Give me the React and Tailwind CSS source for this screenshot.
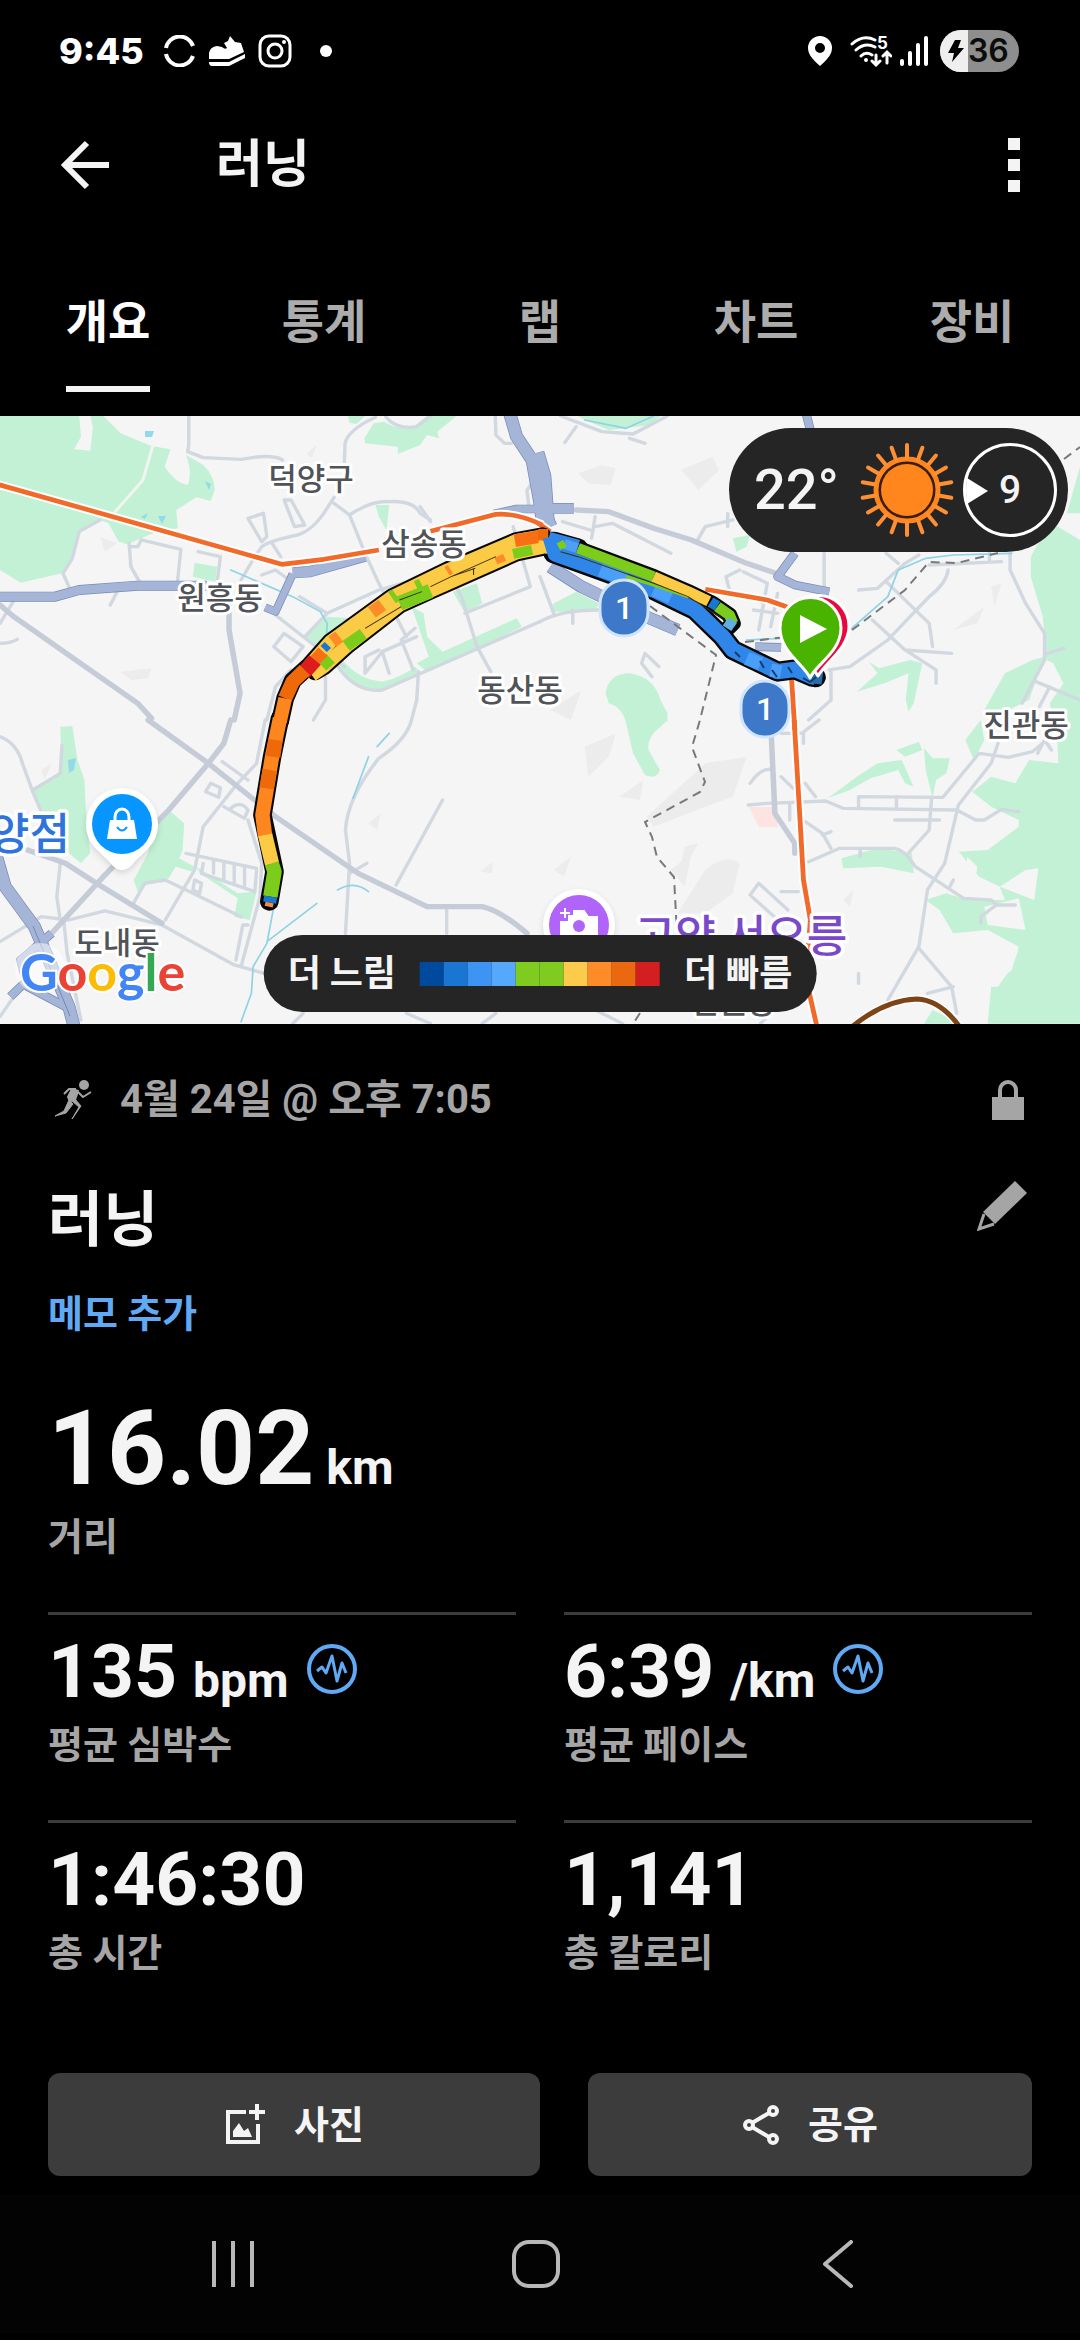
// src/pages/ActivityDetail.jsx
import { useState } from 'react';

const TABS = ['개요', '통계', '랩', '차트', '장비'];

const STATS = [
  { value: '135', unit: 'bpm', label: '평균 심박수', chart: true },
  { value: '6:39', unit: '/km', label: '평균 페이스', chart: true },
  { value: '1:46:30', label: '총 시간' },
  { value: '1,141', label: '총 칼로리' },
];

const LEGEND = [
  'bg-[#004a9e]', 'bg-[#1976d2]', 'bg-[#3d94f2]', 'bg-[#55a8fc]', 'bg-[#7fcb1f]',
  'bg-[#7fcb1f]', 'bg-[#fccb4b]', 'bg-[#fd8b27]', 'bg-[#ea6810]', 'bg-[#d41f20]',
];

// The map is drawn in four tiles, each with its own coordinates
const TILES = {
  tl: 'matrix(0.3444 0 0 0.3333 0 -6)',
  tr: 'matrix(0.3444 0 0 0.3333 540 -6)',
  bl: 'matrix(0.3444 0 0 0.3333 0 304)',
  br: 'matrix(0.3444 0 0 0.3333 540 304)',
};

const PARKS = [
  ['tl', 'M0 18H230L235 80L215 118L262 122L270 50L262 18H300L350 70L440 108L495 118L478 170Q510 220 545 225Q560 190 540 135L590 165Q625 200 623 240L612 273L570 262L512 300L516 355L455 365L410 385L370 403L345 395L315 340L290 330L225 365L210 440L180 490L60 518L0 480Z'],
  ['tl', 'M1058 85L1085 40L1115 35Q1150 60 1200 50L1240 18H1325L1270 65L1275 85L1240 75L1220 105L1155 132V110L1060 100ZM1010 18H1060L1035 42L1015 38Z'],
  ['tl', 'M565 458L630 470L625 515L560 500ZM1090 285H1130L1122 360L1100 320ZM1315 545L1385 520L1400 580L1350 610ZM1195 590L1230 610L1240 680L1285 725L1500 625L1515 650L1400 710L1240 785L1210 760L1245 740ZM885 680L950 620L1020 625L940 700L910 705Z'],
  ['tl', 'M990 745Q1040 810 1110 815Q1170 800 1205 770L1220 785Q1120 850 1070 840Q1020 820 975 765Z'],
  ['tr', 'M110 18H350L320 45L200 60L130 30ZM560 385L610 375L600 410L570 425ZM40 580L105 545L170 580L160 605L30 605Z'],
  ['tr', 'M1568 170L1530 310H1568ZM1425 440L1480 335L1568 390V960H1500L1480 880L1520 820L1490 760L1470 750L1460 620L1425 500ZM1430 750L1465 740L1420 870L1360 900L1290 900L1350 790ZM920 845L980 790L955 755L985 775L1075 750L1110 760L1085 880L1070 905L1062 870L1070 790L1000 820Z'],
  ['tr', 'M190 850Q200 790 260 790Q330 800 350 870L370 910V935H250Q235 890 200 880Z'],
  ['bl', 'M175 20L210 18L225 120L245 180L250 280L262 400L235 430L200 400L160 340L95 215L180 150ZM388 480L430 400L440 320L490 270L535 310L530 390L520 415L565 440L560 455L510 440L490 475L430 490L400 515ZM570 440L690 520L745 515L725 600L680 590L690 535L580 460Z'],
  ['br', 'M248 0H370L350 20Q310 50 315 90L348 150Q340 180 305 165L270 100Z'],
  ['br', 'M1568 -10L1500 0L1505 130L1420 120L1380 190L1310 170L1255 215L1310 260L1390 300V320L1300 390L1215 395L1190 370L1220 400L1275 470L1335 500L1350 540L1240 540L1180 520L1120 540L1160 570L1200 640L1300 630L1390 680L1370 750L1310 800L1300 911H1568Z'],
  ['br', 'M835 235L920 170L980 130L1050 120L1085 200L1060 190L1040 150L960 175L900 210ZM1035 90L1100 65L1110 90L1060 110ZM1115 85L1140 115H1190L1180 160L1150 180L1140 235L1120 150ZM875 415L980 385L1080 400L1085 460L990 440L880 445ZM1115 911L1140 870L1200 900V911ZM1235 60L1280 0L1290 60L1260 120Z'],
];

// bare patches inside the right-hand park
const CLEARINGS = [
  ['br', 'M1410 450L1447 445L1435 540L1335 500ZM1240 410L1270 440L1265 470L1240 450ZM1290 560L1390 535L1410 630L1300 615ZM1110 740L1390 690L1370 740L1330 800H1240Z'],
];

const HILLS = [
  ['tl', 'M350 785L440 775L430 805L380 810ZM290 380L340 400L305 425ZM40 430L90 425L60 445ZM890 130L920 105L905 145Z'],
  ['tr', 'M110 190L180 165L220 175L205 225L140 220ZM410 180L500 140L520 180L460 240ZM1200 660L1290 590L1270 640ZM1310 530L1340 520L1320 590ZM30 900L120 840L90 930Z'],
  ['br', 'M130 80L220 40L200 110L140 170ZM480 130L600 110L560 230L480 260L330 320L310 290ZM380 450L440 400L420 500ZM480 450Q540 400 580 430L560 520L480 580H400ZM880 540L910 510L900 560ZM40 450L90 410L70 470ZM420 380L460 370L400 480ZM230 230L300 180L290 240Z'],
  ['bl', 'M1070 310L1105 280L1095 330ZM1395 455L1430 425V460ZM120 150L150 130L130 180Z'],
];

const ROADS = [
  ['tl', 'M548 18V105L545 125L590 143L700 148Q790 130 820 150M1000 155L1002 100Q1010 60 1090 22M1120 20Q1150 60 1210 50L1250 18M1438 18L1440 75L1465 100H1485M970 262L940 310Q900 370 850 378Q780 395 760 410L740 440L700 510M970 280L1015 315L1060 430L1100 520L1180 680M1015 315Q1080 270 1130 275Q1200 270 1220 310L1250 330'],
  ['tl', 'M720 325L765 310L775 380L760 395ZM825 270L855 350L885 345L845 270ZM790 400L815 440M290 330L230 365L210 445L183 490L200 530M375 400L380 470L405 515M375 410H400L410 390L525 418L515 520M575 425L640 440L630 520M50 555L0 640M340 545L320 585M0 700Q30 700 50 688'],
  ['tl', 'M800 615L930 720L1000 770M870 560L950 610L1100 540L1200 510M885 680L950 610M975 760Q1030 850 1110 840L1568 635M1215 785L1210 870L1195 930M945 800V870L910 930M845 780L800 830L775 930M1300 480L1340 560L1385 710L1425 785M1490 350L1540 530L1350 610M1060 790L1110 725L1210 680M1110 725L1130 790M1165 690L1205 655M1060 790V740L1100 720M1200 780L1165 690M795 710L825 670L880 710L845 755ZM1535 285L1530 240L1560 200M760 495L800 480L840 510M1220 290L1250 335'],
  ['tr', 'M60 18L180 65L270 72L370 18M105 50L72 98M260 85L305 100M455 395L480 350L560 330M65 335L145 360M150 385L160 320M160 350L210 340L380 430M580 480L540 500L550 540L650 580M590 485L660 520L635 660M690 550L670 650M620 600L690 610M825 430V530M0 635Q60 600 170 600M95 600V640M0 500L40 610'],
  ['tr', 'M925 540L980 535L1060 460L1100 435M1005 515L1130 640L1140 710M1005 430L1040 460M965 630L1060 720L1150 780V820M1060 720L1195 730M1185 480Q1180 520 1130 560L1010 690L900 770L840 780M1130 465L1340 455M1365 430V480L1410 580L1465 670V750L1400 880M1440 815L1568 870M1480 830L1450 890M1520 715L1475 730M845 780V870L780 930M345 770L305 730L295 760L325 800M545 310V350M1305 400V450'],
  ['bl', 'M0 50Q50 70 65 130L95 215L130 300M95 210L175 160L180 75M0 665L120 590L200 600L305 573L470 615L680 735L768 760M175 430L165 530L175 600M385 555L420 490L480 480L560 520L700 590M480 600L565 450L590 320L690 190L745 130L770 0M540 400L745 445'],
  ['bl', 'M597 215L612 190L640 203L635 232ZM670 265Q700 240 720 270L710 295L650 260M720 300L760 430L755 530L700 740M685 720L705 615H720M590 430L585 460L740 515L745 450M620 420V460M650 430V480M680 435V490M710 440V500M565 480L560 510L580 520L585 490ZM645 125L720 180M1195 0Q1180 60 1100 115Q1010 230 1003 330L1015 430L1003 640M1285 240L1150 495M1297 570V640M1015 460L1065 430M185 600L195 700L235 900M850 911L880 880M1180 880L1250 911M0 890L60 800M1400 911L1440 880'],
  ['br', 'M605 255L660 250L830 243L880 265L1210 270L1265 300H1290L1340 268L1390 275M925 262V230L1170 232L1275 100L1360 112L1430 95L1465 65M1035 230V265M1330 70L1310 130L1215 255L1175 430L1125 510L1100 680L1010 840M1100 685L1195 800L1210 880M1125 820L1200 800M780 425L870 385H1030Q1060 390 1090 440L1230 535L1310 540L1325 555L1280 590V610M1325 555H1380M1030 300H1160M1137 235L1130 330L1065 405'],
  ['br', 'M610 190Q640 145 670 148M700 170L735 205M770 190L800 230M770 305L820 340L845 385M845 335L820 345M725 250V300M700 515H750M610 525L635 490L720 570M615 530L680 590M925 760V790M930 385V410M1200 480L1190 500M700 40H760L810 0M765 70V40M160 870L240 911M640 911L660 890M1445 100L1465 60L1485 90'],
];

const MAIN_ROADS = [
  ['tl', 'M0 585L40 620L400 880L440 925M665 610V660L697 850L680 930'],
  ['tr', 'M105 300L200 305L330 355L440 390L600 460L700 495'],
  ['bl', 'M430 0L605 130L800 290L1040 460L1240 560H1400Q1450 570 1530 640M670 0L650 70L605 130L490 270L300 470L150 640M80 390L190 430L280 490L470 610'],
  ['br', 'M672 55L682 280L740 370V400'],
];

const HIGHWAYS = [
  ['tl', 26, 'M0 560H160L230 540L400 527H600'],
  ['tl', 20, 'M770 592L800 605L850 492'],
  ['tl', 30, 'M850 488L900 485L1060 438'],
  ['tl', 34, 'M1480 10L1500 80L1545 150L1568 280L1600 350'],
  ['tl', 22, 'M1435 312L1500 297H1568'],
  ['tr', 52, 'M-15 130L5 200L15 340'],
  ['tr', 28, 'M25 295H98'],
  ['tr', 22, 'M770 0L785 60M740 430L690 500L740 525L840 545M625 710L700 712'],
  ['tr', 34, 'M30 470L120 530L250 595L400 660'],
  ['bl', 34, 'M-10 410L15 500L100 620L200 860L215 920'],
  ['bl', 22, 'M150 640L60 720L80 800L190 860M30 830L80 780'],
];

const WATER = [
  ['tl', 'M670 480L850 560L930 605L950 640L948 680'],
  ['tr', 'M905 655L1010 560L1040 480L1120 445L1200 435L1370 430M130 30L250 55L330 18M600 690L700 685'],
  ['bl', 'M795 560L775 670L735 740L730 820L700 905M920 550L775 665M1130 40L1095 80M1070 110L1025 235M980 510Q1030 480 1070 515'],
];

const SUBWAY = [
  ['tl', 'M-10 222L818 463L940 448L1100 420M1250 364L1440 313Q1500 308 1575 345'],
  ['tr', 'M-5 340L30 365M480 538L660 570L720 592M730 800L740 960'],
  ['br', 'M738 0L755 300L765 480L785 600L778 700L780 810L803 915'],
];

// black casing drawn under the pace colours
const ROUTE_CASING = [
  ['tl', 52, 'M1575 378L1500 392L1300 480L1200 530L1140 560L960 695L900 765L850 812L828 865L813 935'],
  ['tl', 52, 'M1575 412L1500 428L1250 543L1160 585L1010 705L940 770L915 785'],
  ['bl', 54, 'M813 -5L790 110L762 285L797 455L782 545'],
  ['tr', 60, 'M-5 395L40 395L110 415'],
  ['tr', 60, 'M40 430L200 490L330 540L450 600L530 680L560 720L640 760L690 785L740 778L790 800L800 802'],
  ['tr', 46, 'M60 400L110 415L330 500L430 545L500 580L550 615L560 640L545 655'],
];

const ROUTE = [
  ['tl', 40, '#fccb45', 'M1575 412L1500 428L1250 543L1160 585L1010 705L940 770L905 795'],
  ['tl', 40, '#fccb45', 'M1575 378L1500 392L1300 480L1200 530L1140 560L960 695L900 765'],
  ['tl', 38, '#f96f16', 'M1575 378L1495 392'],
  ['tl', 30, '#7ccc1c', 'M1545 420L1490 432'],
  ['tl', 22, '#fd8b27', 'M1465 442L1440 453'],
  ['tl', 30, '#fd8b27', 'M1308 478L1298 484'],
  ['tl', 40, '#7ccc1c', 'M1225 525L1210 532M1150 555L1138 563'],
  ['tl', 44, '#7ccc1c', 'M1250 543L1160 580'],
  ['tl', 38, '#fd8b27', 'M1110 585L1080 607M985 680L965 695'],
  ['tl', 36, '#7ccc1c', 'M1055 672L1005 708M960 745L935 768'],
  ['tl', 26, '#1976d2', 'M952 705L940 717'],
  ['tl', 36, '#f96f16', 'M938 725L915 750'],
  ['tl', 44, '#dc1d1d', 'M915 750L880 790'],
  ['tl', 42, '#ed690a', 'M885 780L850 815L828 865'],
  ['tl', 40, '#fd861f', 'M828 865L813 935'],
  ['bl', 42, '#fd861f', 'M813 -5L790 110L762 285L770 350'],
  ['bl', 42, '#ed690a', 'M800 60L793 110M783 150L774 205'],
  ['bl', 42, '#fccb45', 'M770 345L790 432'],
  ['bl', 42, '#7ccc1c', 'M789 430L797 455L785 530'],
  ['bl', 38, '#1976d2', 'M786 530L783 548'],
  ['bl', 24, '#f58a45', 'M783 548L780 560'],
  ['tr', 42, '#ed690a', 'M-5 378H24'],
  ['tr', 38, '#fccb45', 'M-5 410L24 412'],
  ['tr', 46, '#2f86e8', 'M24 388L110 412'],
  ['tr', 46, '#2f86e8', 'M30 380L45 432L180 482L330 540L450 600L530 680L560 720L640 760L690 785L740 778L790 800L800 802'],
  ['tr', 40, '#4a9ff8', 'M175 480L250 508M330 540L380 562M600 745L640 762M670 780L700 786'],
  ['tr', 40, '#2a6cab', 'M790 800L820 804'],
  ['tr', 10, '#7ccc1c', 'M250 500L330 525L430 560'],
  ['tr', 30, '#4f9ff5', 'M70 402L108 414'],
  ['tr', 22, '#7ccc1c', 'M58 395L68 415'],
  ['tr', 32, '#7ccc1c', 'M110 415L330 500'],
  ['tr', 32, '#fccb45', 'M330 500L430 545L490 574'],
  ['tr', 32, '#1976d2', 'M495 576L515 588'],
  ['tr', 32, '#7ccc1c', 'M515 590L550 615L560 640'],
  ['tr', 30, '#5fb0e0', 'M560 630L543 655'],
];

const ROUTE_DIVIDER = [
  ['tl', 'M1250 530L1310 500L1440 440M1310 500L1380 475M1160 570L1225 545M1060 655L1165 590M1375 475V495'],
  ['tr', 'M60 425L110 440L330 520L430 560L530 625'],
];

const MAP_LABELS = [
  { x: 311, y: 74, text: '덕양구' },
  { x: 424, y: 139, text: '삼송동' },
  { x: 220, y: 193, text: '원흥동' },
  { x: 520, y: 285, text: '동산동' },
  { x: 1026, y: 320, text: '진관동' },
  { x: 117, y: 538, text: '도내동' },
  { x: 733, y: 597, text: '신원동' },
];

function Layer({ items, ...props }) {
  return items.map(([tile, d], i) => <path key={i} d={d} transform={TILES[tile]} {...props} />);
}

function RouteMap() {
  return (
    <svg viewBox="0 0 1080 608" preserveAspectRatio="xMidYMid slice" className="block w-full" role="img" aria-label="러닝 경로 지도">
      <rect width="1080" height="608" fill="#f5f5f5" />
      <Layer items={HILLS} fill="#ececed" />
      <Layer items={PARKS} fill="#c3f1d5" />
      <Layer items={CLEARINGS} fill="#f5f5f5" />
      <path d="M749 391h26l3 20h-19z" fill="#fde3e1" />
      <path d="M145 15h9l-2 6h-7zM141 101l7-4-3 6zM158 100h8l-4 8zM198 60l6 3M205 65l6 3-2 6zM68 344l8-2-2 12-5 3z" fill="#92d9ea" />
      <path d="M153 29L143 64L114 97" fill="none" stroke="#f1f4f1" strokeWidth="3" />
      <g fill="none" strokeLinecap="round" strokeLinejoin="round">
        <Layer items={ROADS} stroke="#d2d8df" strokeWidth="10" />
        <Layer items={MAIN_ROADS} stroke="#c5ccd7" strokeWidth="16" />
        <Layer items={WATER} stroke="#8fd3e5" strokeWidth="5" />
      </g>
      <g fill="none" strokeLinejoin="round">
        {HIGHWAYS.map(([tile, w, d], i) => (
          <path key={i} d={d} transform={TILES[tile]} stroke="#7688b4" strokeWidth={w + 4} />
        ))}
        {HIGHWAYS.map(([tile, w, d], i) => (
          <path key={i} d={d} transform={TILES[tile]} stroke="#a4b5d8" strokeWidth={w} />
        ))}
        <path d="M33 510L70 600" stroke="#7688b4" strokeWidth="1" />
      </g>
      <g fill="none" stroke="#77797c" strokeWidth="2" strokeDasharray="9 6">
        <path d="M650 190L716 239L700 304L692 331L705 366L700 376L645 406L652 421L657 441L674 461L677 518" />
        <path d="M852 214L905 174L929 146L957 147L998 137M1064 43L1080 31M745 226L785 221M640 597L633 608" />
      </g>
      <g fill="none" strokeLinejoin="round">
        <Layer items={SUBWAY} stroke="#ffffff" strokeWidth="26" />
        <Layer items={SUBWAY} stroke="#f26a2a" strokeWidth="14" />
        <path d="M853 610Q885 584 917 583Q940 584 959 610" stroke="#ffffff" strokeWidth="8" />
        <path d="M853 610Q885 584 917 583Q940 584 959 610" stroke="#7d4418" strokeWidth="5" />
      </g>

      <g fill="none" strokeLinejoin="round">
        {ROUTE_CASING.map(([tile, w, d], i) => (
          <path key={i} d={d} transform={TILES[tile]} stroke="#080808" strokeWidth={w} strokeLinecap="round" />
        ))}
        {ROUTE.map(([tile, w, color, d], i) => (
          <path key={i} d={d} transform={TILES[tile]} stroke={color} strokeWidth={w} />
        ))}
        <Layer items={ROUTE_DIVIDER} stroke="#3a3010" strokeWidth="3" />
      </g>
      <path d="M735 236l5 5M760 245l4 7M772 254l5 7M788 251l4 6M803 262l7 4 6-5" fill="none" stroke="#123c6b" strokeWidth="2" />

      <g fontFamily="'Noto Sans CJK KR', sans-serif" textAnchor="middle" paintOrder="stroke" stroke="#ffffff" strokeLinejoin="round">
        <g fontSize="31" fontWeight="500" fill="#505358" strokeWidth="6">
          {MAP_LABELS.map((l) => <text key={l.text} x={l.x} y={l.y}>{l.text}</text>)}
        </g>
        <g fontSize="44" fontWeight="500" strokeWidth="7">
          <text x="70" y="434" textAnchor="end" fill="#2f74db">양점</text>
          <text x="741" y="536" fill="#7a49c9">고양 서오릉</text>
        </g>
      </g>

      {/* route 1 shields */}
      {[[624, 192], [765, 293]].map(([x, y]) => (
        <g key={x}>
          <rect x={x - 24} y={y - 28} width="48" height="56" rx="24" fill="#3d78c9" stroke="#cfe4fd" strokeWidth="3" />
          <text x={x} y={y + 11} textAnchor="middle" fontFamily="Roboto, sans-serif" fontSize="32" fontWeight="500" fill="#ffffff">1</text>
        </g>
      ))}

      {/* finish and start pins */}
      <g stroke="#ffffff" strokeWidth="3" strokeLinejoin="round">
        <path d="M818 260C812 248 786 232 788 210A30 30 0 0 1 849 210C849 232 826 246 818 260Z" fill="#e8093f" />
        <path d="M810 262C804 248 780 236 780 212A30 30 0 0 1 841 212C841 236 816 248 810 262Z" fill="#49b300" />
      </g>
      <path d="M800 199V227L827 213Z" fill="#ffffff" />

      {/* place pins */}
      <g fill="#ffffff" className="drop-shadow-md">
        <path d="M122 372A36 36 0 0 1 158 408C158 430 142 436 131 450Q122 458 113 450C102 436 86 430 86 408A36 36 0 0 1 122 372Z" />
        <circle cx="579" cy="509" r="36" />
      </g>
      <circle cx="122" cy="408" r="30" fill="#0796ff" />
      <path d="M110 404H134L137 423H107Z" fill="#ffffff" />
      <path d="M115 406V401A7 8 0 0 1 129 401V406" fill="none" stroke="#ffffff" strokeWidth="3" />
      <path d="M117 411Q122 418 127 411" fill="none" stroke="#0796ff" strokeWidth="2" />
      <circle cx="579" cy="509" r="30" fill="#b164fa" />
      <path d="M561 506H569V500H574V495H584L588 501H597V526H561ZM560 497H570M565 492V502" fill="#ffffff" stroke="#ffffff" strokeWidth="2" />
      <circle cx="579" cy="510" r="6" fill="#b164fa" />

      <circle cx="40" cy="552" r="25" fill="#ffffff" opacity="0.5" />
      <text x="20" y="575" fontFamily="Lato, sans-serif" fontSize="52" fontWeight="700" paintOrder="stroke" stroke="#ffffff" strokeWidth="4">
        <tspan fill="#4285f4">G</tspan>
        <tspan fill="#ea4335">o</tspan>
        <tspan fill="#fbbc05">o</tspan>
        <tspan fill="#4285f4">g</tspan>
        <tspan fill="#34a853">l</tspan>
        <tspan fill="#ea4335">e</tspan>
      </text>
    </svg>
  );
}

function SunIcon() {
  const rays = Array.from({ length: 18 }, (_, i) => i * 20);
  return (
    <svg viewBox="-48 -48 96 96" className="size-24" aria-hidden="true">
      <circle r="31" fill="#3a1d06" stroke="#ff861d" strokeWidth="5" />
      <circle r="26" fill="#ff861d" />
      {rays.map((a) => (
        <path key={a} d="M0 -32V-45" transform={`rotate(${a})`} stroke="#ff8f33" strokeWidth="4" strokeLinecap="round" />
      ))}
    </svg>
  );
}

function ChartIcon() {
  return (
    <svg viewBox="0 0 50 50" className="size-[50px]" fill="none" stroke="#5fa9f5" aria-hidden="true">
      <circle cx="25" cy="25" r="23" strokeWidth="4" />
      <path d="M10 27L15 23L19 29L25 12L30 37L35 19L39 29" strokeWidth="3" strokeLinejoin="round" />
    </svg>
  );
}

function StatusBar() {
  return (
    <div className="flex h-[102px] items-center pl-[59px] pr-[61px] text-white">
      <span className="text-[36px] leading-[48px] font-extrabold font-[Inter,sans-serif]">9:45</span>
      <svg viewBox="0 0 32 32" className="ml-5 size-8" fill="none" stroke="currentColor" strokeWidth="4" aria-hidden="true">
        <path d="M2 13A14 14 0 0 1 29 11M2 19A14 14 0 0 0 29 21" />
      </svg>
      <svg viewBox="0 0 38 32" className="ml-3 h-8 w-[38px]" fill="currentColor" aria-hidden="true">
        <path d="M1 22V18Q2 12 9 11L14 12Q17 15 19 13L16 8L20 6L22 1L27 7L33 8L36 17L21 24H1Z" />
        <path d="M1 27H21L37 19V23L21 31H4Q1 31 1 27Z" />
      </svg>
      <svg viewBox="0 0 34 34" className="ml-3 size-[34px]" fill="none" stroke="currentColor" strokeWidth="3" aria-hidden="true">
        <rect x="2" y="2" width="30" height="30" rx="9" />
        <circle cx="17" cy="17" r="7" />
        <circle cx="26" cy="8" r="2" fill="currentColor" stroke="none" />
      </svg>
      <span className="ml-7 size-3 rounded-full bg-white" />

      <svg viewBox="0 0 24 30" className="ml-auto h-[30px] w-6" fill="currentColor" fillRule="evenodd" aria-hidden="true">
        <path d="M12 0A12 12 0 0 1 24 12C24 20 16 26 12 30C8 26 0 20 0 12A12 12 0 0 1 12 0ZM12 7A5 5 0 1 0 12 17A5 5 0 1 0 12 7Z" />
      </svg>
      <svg viewBox="0 -4 42 40" className="ml-[18px] h-10 w-[42px]" fill="none" stroke="currentColor" strokeWidth="3" strokeLinecap="round" aria-hidden="true">
        <path d="M2 9Q13 -1 25 5M6 15Q15 7 25 12M11 21Q16 16 22 20" />
        <circle cx="16" cy="25" r="2" fill="currentColor" stroke="none" />
        <path d="M26 20V29M22 26L26 30L30 26M37 28V18M33 21L37 17L41 21" />
        <text x="27" y="14" fontFamily="Inter, sans-serif" fontSize="17" fontWeight="700" fill="currentColor" stroke="none">5</text>
      </svg>
      <svg viewBox="0 0 28 30" className="ml-2 h-[30px] w-7" stroke="currentColor" strokeWidth="4" strokeLinecap="round" aria-hidden="true">
        <path d="M2 25V28M10 17V28M18 9V28M26 2V28" />
      </svg>
      <span className="ml-3 flex h-[42px] w-[79px] items-center overflow-hidden rounded-full bg-[#8e8e8e]">
        <span className="flex h-full w-7 items-center justify-center bg-[#efefef]">
          <svg viewBox="0 0 16 22" className="ml-1 h-[22px] w-4" fill="#000000" aria-hidden="true">
            <path d="M7 0H13L10 8H16L4 22L6 13H0Z" />
          </svg>
        </span>
        <span className="text-[32px] leading-[42px] font-semibold text-[#0c0c0c] font-[Inter,sans-serif]">36</span>
      </span>
    </div>
  );
}

function WeatherBadge() {
  return (
    <div className="absolute top-3 right-3 flex h-[124px] items-center rounded-full bg-[#252525] pr-[11px] pl-[25px] text-[#f4f4f4]">
      <span className="text-[56px] leading-[64px] font-medium">22°</span>
      <span className="ml-5"><SunIcon /></span>
      <span className="relative ml-2 flex size-[94px] items-center justify-center rounded-full border-[3px] border-white text-[39px] leading-[48px] font-medium">
        <svg viewBox="0 0 24 26" className="absolute top-8 left-0 h-[26px] w-6" fill="#ffffff" aria-hidden="true">
          <path d="M1 0Q-1 13 1 26L22 13Z" />
        </svg>
        9
      </span>
    </div>
  );
}

function PaceLegend() {
  return (
    <div className="absolute bottom-3 left-1/2 flex h-[77px] -translate-x-1/2 items-center gap-6 rounded-full bg-[#252525] px-6 text-[36px] leading-[48px] font-bold whitespace-nowrap text-[#f4f4f4]">
      <span>더 느림</span>
      <span className="flex">
        {LEGEND.map((color, i) => <span key={i} className={`h-6 w-6 ${color}`} />)}
      </span>
      <span>더 빠름</span>
    </div>
  );
}

function Stat({ stat }) {
  return (
    <div className="border-t-[3px] border-[#3c3c3c] pt-[10px] pb-[51px]">
      <div className="flex h-[92px] items-center">
        <p className="text-[75px] leading-[92px] font-bold text-[#f4f4f4]">
          {stat.value}
          {stat.unit && <span className="ml-4 text-[48px] leading-none font-bold">{stat.unit}</span>}
        </p>
        {stat.chart && <button aria-label={`${stat.label} 차트`} className="mb-1 ml-[18px]"><ChartIcon /></button>}
      </div>
      <p className="mt-1 text-[38px] leading-[48px] font-bold text-[#a5a5a5]">{stat.label}</p>
    </div>
  );
}

export default function App() {
  const [tab, setTab] = useState(0);

  return (
    <div className="flex min-h-screen flex-col bg-black font-[Roboto,'Noto_Sans_CJK_KR',sans-serif]">
      <StatusBar />

      <header className="flex h-[126px] items-center pr-[60px] pl-[60px] text-[#f4f4f4]">
        <button aria-label="뒤로">
          <svg viewBox="0 0 50 50" className="size-[50px]" fill="none" stroke="currentColor" strokeWidth="6" aria-hidden="true">
            <path d="M49 25H6M27 3L5 25L27 47" />
          </svg>
        </button>
        <h1 className="ml-[106px] text-[51px] leading-[60px] font-bold">러닝</h1>
        <button aria-label="더보기" className="ml-auto flex flex-col gap-[9px]">
          <span className="size-3 bg-current" />
          <span className="size-3 bg-current" />
          <span className="size-3 bg-current" />
        </button>
      </header>

      <nav className="grid h-[188px] grid-cols-5">
        {TABS.map((name, i) => (
          <button key={name} onClick={() => setTab(i)} className="flex flex-col items-center pt-16">
            <span className={i === tab ? 'text-[46px] leading-[60px] font-bold text-white' : 'text-[46px] leading-[60px] font-bold text-[#acacac]'}>
              {name}
            </span>
            {i === tab && <span className="mt-[34px] h-[6px] w-[84px] bg-[#f4f4f4]" />}
          </button>
        ))}
      </nav>

      <section className="relative">
        <RouteMap />
        <WeatherBadge />
        <PaceLegend />
      </section>

      <main className="px-12">
        <div className="mt-[46px] flex h-[60px] items-center text-[#a5a5a5]">
          <svg viewBox="0 0 38 40" className="ml-[6px] h-10 w-[38px]" fill="none" stroke="currentColor" strokeLinejoin="round" aria-hidden="true">
            <circle cx="30" cy="5" r="5" fill="currentColor" stroke="none" />
            <path d="M18 9L24 11L21 20L16 21L14 17Z" fill="currentColor" strokeWidth="2" />
            <path d="M22 9H15L10 14M24 12L29 17L37 12" strokeWidth="2" />
            <path d="M15 20L10 31L1 36L12 33L19 24ZM18 21L25 27L18 39L27 26L21 19Z" fill="currentColor" strokeWidth="1" />
          </svg>
          <p className="ml-7 text-[40px] leading-[60px] font-bold">4월 24일 @ 오후 7:05</p>
          <svg viewBox="0 0 32 40" className="mr-2 ml-auto h-10 w-8" role="img" aria-label="비공개">
            <path d="M8 18V10A8 8 0 0 1 24 10V18" fill="none" stroke="currentColor" strokeWidth="4" />
            <path d="M0 17H32V40H0Z" fill="currentColor" />
          </svg>
        </div>

        <div className="mt-[51px] flex h-20 items-start">
          <h2 className="text-[60px] leading-[80px] font-bold text-[#f4f4f4]">러닝</h2>
          <button aria-label="이름 편집" className="mr-[5px] ml-auto text-[#a5a5a5]">
            <svg viewBox="0 0 50 50" className="size-[50px]" aria-hidden="true">
              <path d="M38 0L50 12L18 43L6 31Z" fill="currentColor" />
              <path d="M7 33L2 48L17 43" fill="none" stroke="currentColor" strokeWidth="3" />
            </svg>
          </button>
        </div>

        <button className="mt-[23px] block text-[38px] leading-[60px] font-bold text-[#5fa9f5]">메모 추가</button>

        <p className="mt-[45px] text-[103px] leading-[120px] font-bold text-[#f4f4f4]">
          16.02<span className="ml-3 text-[48px] leading-none font-bold">km</span>
        </p>
        <p className="mt-1 text-[38px] leading-[48px] font-bold text-[#a5a5a5]">거리</p>

        <div className="mt-[51px] grid grid-cols-2 gap-x-12">
          {STATS.map((stat) => <Stat key={stat.label} stat={stat} />)}
        </div>

        <div className="mt-[45px] grid grid-cols-[492fr_444fr] gap-12 text-[38px] leading-[48px] font-bold text-[#f4f4f4]">
          <button className="flex h-[103px] items-center justify-center gap-7 rounded-xl bg-[#3c3c3c]">
            <svg viewBox="0 0 42 42" className="size-[42px]" aria-hidden="true">
              <path d="M22 8H4V38H34V20M33 0V16M25 8H41" fill="none" stroke="currentColor" strokeWidth="4" />
              <path d="M9 33V27L15 19L20 27L24 24L28 33Z" fill="currentColor" />
            </svg>
            사진
          </button>
          <button className="flex h-[103px] items-center justify-center gap-7 rounded-xl bg-[#3c3c3c]">
            <svg viewBox="0 0 38 42" className="h-[42px] w-[38px]" fill="none" stroke="currentColor" strokeWidth="4" aria-hidden="true">
              <circle cx="7" cy="21" r="4" />
              <circle cx="31" cy="7" r="4" />
              <circle cx="31" cy="35" r="4" />
              <path d="M10 19L27 9M10 23L27 33" />
            </svg>
            공유
          </button>
        </div>
      </main>

      <footer className="mt-[18px] flex h-[140px] items-center justify-between bg-[#030303] pr-[226px] pl-[210px] text-[#b8b8b8]">
        <button aria-label="최근 앱">
          <svg viewBox="0 0 48 48" className="size-12" fill="none" stroke="currentColor" strokeWidth="4" aria-hidden="true">
            <path d="M4 1V47M23 1V47M42 1V47" />
          </svg>
        </button>
        <button aria-label="홈">
          <svg viewBox="0 0 48 48" className="size-12" fill="none" stroke="currentColor" strokeWidth="4" aria-hidden="true">
            <rect x="2" y="2" width="44" height="44" rx="15" />
          </svg>
        </button>
        <button aria-label="뒤로 가기">
          <svg viewBox="-8 0 40 48" className="h-12 w-10" fill="none" stroke="currentColor" strokeWidth="4" strokeLinecap="round" strokeLinejoin="round" aria-hidden="true">
            <path d="M29 2L3 24L29 46" />
          </svg>
        </button>
      </footer>
    </div>
  );
}
